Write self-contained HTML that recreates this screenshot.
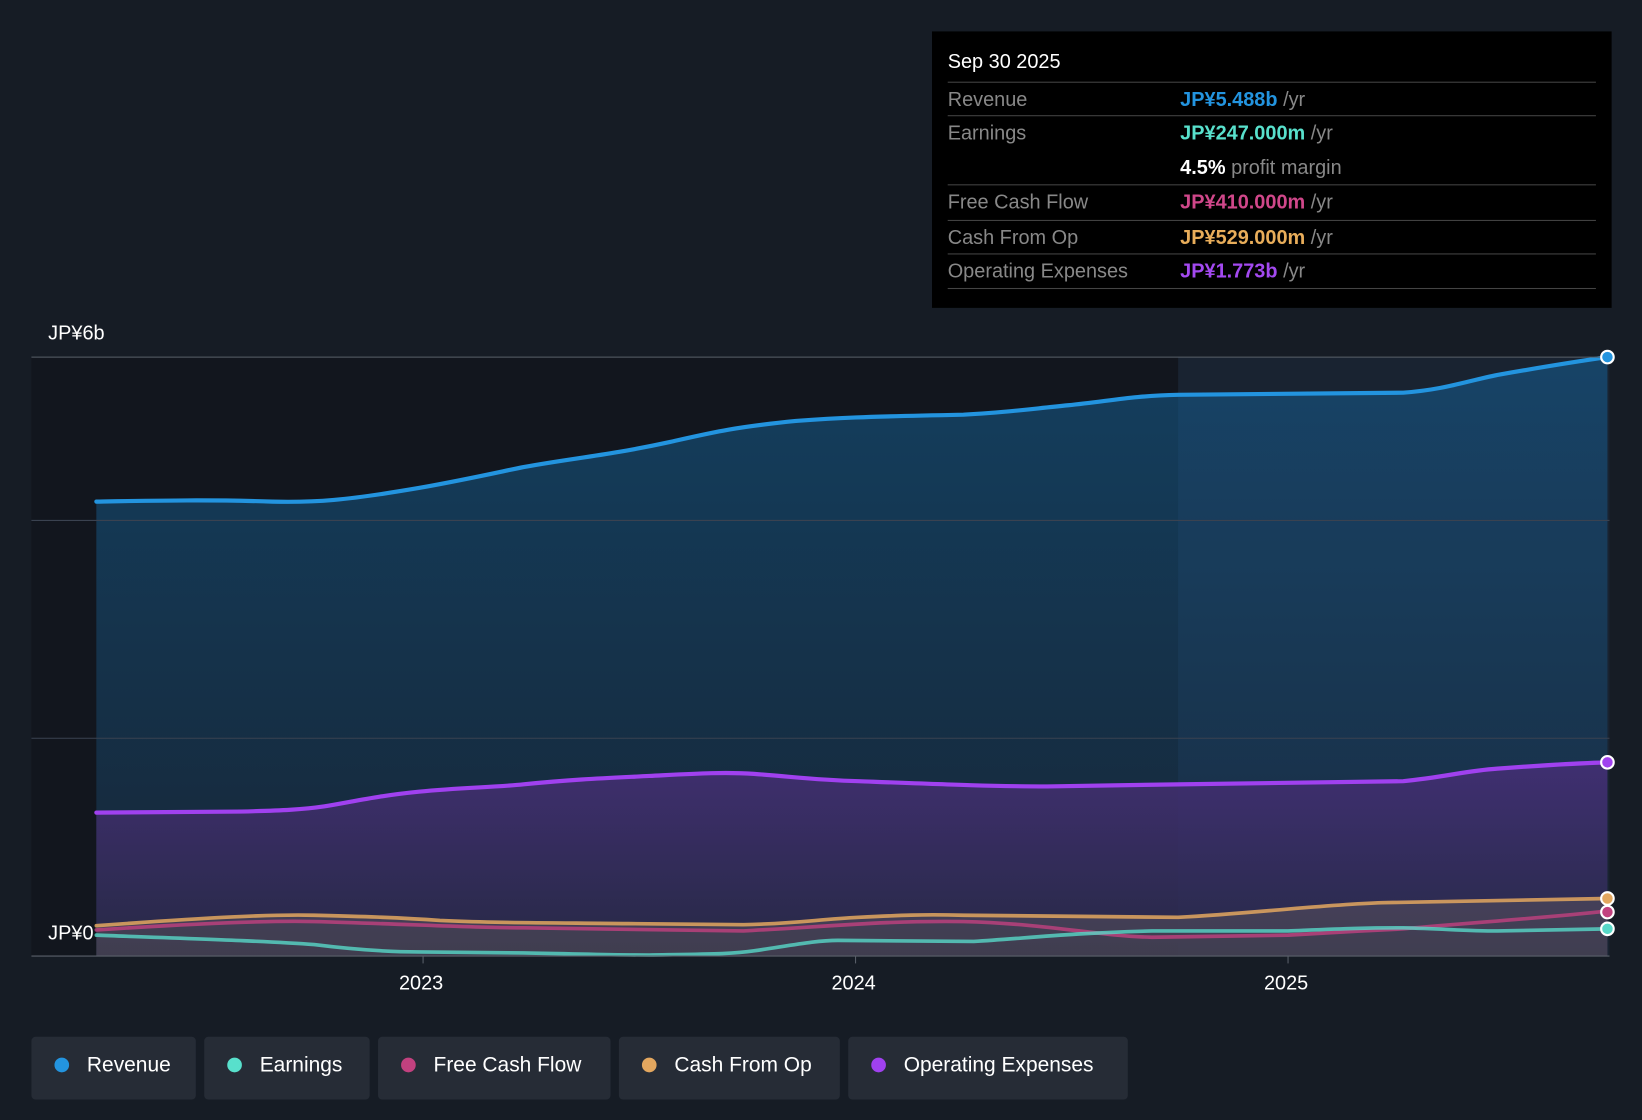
<!DOCTYPE html>
<html><head><meta charset="utf-8"><style>
html,body{margin:0;padding:0;background:#161c25;width:1642px;height:1120px;overflow:hidden}
#w{width:1568px;height:1070px;transform:scale(1.04719);transform-origin:0 0;position:relative;font-family:"Liberation Sans",sans-serif}
.tt{position:absolute;left:890px;top:30px;width:649px;height:264px;background:#000;color:#fff}
.tt .d{position:absolute;left:15px;top:19px;font-size:19px}
.row{position:absolute;left:15px;width:619px;border-top:1px solid #444;font-size:19px;color:#888;height:32px;line-height:33px}
.row b{font-weight:normal;position:absolute;left:222px}
.row b span{font-weight:bold}
.leg{position:absolute;top:990px;height:60px;background:#262c36;border-radius:4px;color:#fff;font-size:20px;line-height:55px;padding-left:53px;box-sizing:border-box}
.leg i{position:absolute;left:22px;top:20px;width:14px;height:14px;border-radius:50%}
.ax{position:absolute;color:#fff;font-size:19px}
</style></head><body><div id="w">
<svg width="1568" height="1070" style="position:absolute;left:0;top:0">
<defs>
<linearGradient id="rg" x1="0" y1="0" x2="0" y2="1"><stop offset="0" stop-color="#14466a"/><stop offset="1" stop-color="#17283a"/></linearGradient>
<linearGradient id="og" x1="0" y1="0" x2="0" y2="1"><stop offset="0" stop-color="#4a2f7a"/><stop offset="1" stop-color="#2a2a48"/></linearGradient>
</defs>
<rect x="30" y="341" width="1095" height="572" fill="#12161e"/>
<path d="M92 479 C150 478 200 477 260 479 C300 480 330 478 400 466 C450 457 480 450 500 446 C550 437 580 435 640 422 C680 413 700 408 760 402 C800 399 820 398 920 396 C960 394 980 391 1020 387 C1060 383 1080 378 1125 377 L1340 375 C1380 372 1400 364 1430 358 C1470 351 1500 346 1535 341 L1535 913 L92 913 Z" fill="url(#rg)" opacity="0.85"/>
<rect x="1125" y="341" width="412" height="572" fill="#3a80c0" opacity="0.08"/>
<path d="M92 776 L230 775 C270 774 290 773 310 770 C340 765 360 760 400 756 C440 752 470 752 500 749 C550 744 580 743 620 741 C660 739 690 737 720 739 C760 742 780 745 820 746 C900 749 950 751 1000 751 L1125 749 L1340 746 C1380 742 1400 736 1430 734 C1470 731 1500 729 1535 728 L1535 913 L92 913 Z" fill="url(#og)" opacity="0.8"/>
<path d="M92 884 C200 876 260 873 300 874 C340 875 380 876 420 879 C460 881 500 881 600 882 L710 883 C760 882 780 878 820 876 C860 874 880 873 920 874 L1125 876 C1200 872 1260 864 1320 862 L1535 858 L1535 913 L92 913Z" fill="#8a7a70" opacity="0.25"/>
<g fill="none" stroke-width="4" stroke-linecap="round">
<path d="M92 479 C150 478 200 477 260 479 C300 480 330 478 400 466 C450 457 480 450 500 446 C550 437 580 435 640 422 C680 413 700 408 760 402 C800 399 820 398 920 396 C960 394 980 391 1020 387 C1060 383 1080 378 1125 377 L1340 375 C1380 372 1400 364 1430 358 C1470 351 1500 346 1535 341" stroke="#2394df"/>
<path d="M92 776 L230 775 C270 774 290 773 310 770 C340 765 360 760 400 756 C440 752 470 752 500 749 C550 744 580 743 620 741 C660 739 690 737 720 739 C760 742 780 745 820 746 C900 749 950 751 1000 751 L1125 749 L1340 746 C1380 742 1400 736 1430 734 C1470 731 1500 729 1535 728" stroke="#a041ef"/>
<path d="M92 884 C200 876 260 873 300 874 C340 875 380 876 420 879 C460 881 500 881 600 882 L710 883 C760 882 780 878 820 876 C860 874 880 873 920 874 L1125 876 C1200 872 1260 864 1320 862 L1535 858" stroke="#e3a75f" stroke-width="3.5" opacity="0.85"/>
<path d="M92 888 C200 881 260 879 300 880 C380 882 450 886 500 886 L710 889 C800 884 850 879 920 880 C1000 882 1050 894 1100 895 L1230 893 C1280 890 1300 889 1340 887 C1420 880 1480 876 1535 870" stroke="#c2417f" stroke-width="3.5" opacity="0.8"/>
<path d="M92 893 C200 897 260 899 300 902 C340 907 370 909 400 909 L500 910 C560 911 580 912 620 912 C680 911 700 911 720 908 C760 902 780 898 800 898 L930 899 C980 896 1020 891 1100 889 L1230 889 C1280 887 1300 886 1340 886 C1380 887 1400 889 1430 889 L1535 887" stroke="#58d8c8" stroke-width="3.5" opacity="0.8"/>
</g>
<line x1="30" y1="341" x2="1537" y2="341" stroke="#5a606a" stroke-width="1"/>
<line x1="30" y1="497" x2="1537" y2="497" stroke="#3a4250" stroke-width="1"/>
<line x1="30" y1="705" x2="1537" y2="705" stroke="#3a4250" stroke-width="1"/>
<line x1="30" y1="913" x2="1537" y2="913" stroke="#5a606a" stroke-width="1"/>
<line x1="404" y1="913" x2="404" y2="920" stroke="#5a606a"/><line x1="817" y1="913" x2="817" y2="920" stroke="#5a606a"/><line x1="1230" y1="913" x2="1230" y2="920" stroke="#5a606a"/>
<g stroke="#fff" stroke-width="2">
<circle cx="1535" cy="341" r="6" fill="#2394df"/>
<circle cx="1535" cy="728" r="6" fill="#a041ef"/>
<circle cx="1535" cy="858" r="6" fill="#e3a75f"/>
<circle cx="1535" cy="871" r="6" fill="#c2417f"/>
<circle cx="1535" cy="887" r="6" fill="#58d8c8"/>
</g>
</svg>
<div class="ax" style="left:46px;top:308px">JP¥6b</div>
<div class="ax" style="left:46px;top:881px">JP¥0</div>
<div class="ax" style="left:381px;top:929px">2023</div>
<div class="ax" style="left:794px;top:929px">2024</div>
<div class="ax" style="left:1207px;top:929px">2025</div>
<div class="tt">
<div class="d">Sep 30 2025</div>
<div class="row" style="top:48px">Revenue<b><span style="color:#2394df">JP¥5.488b</span> /yr</b></div>
<div class="row" style="top:80px;height:65px">Earnings<b><span style="color:#58e0cc">JP¥247.000m</span> /yr<br><span style="color:#fff">4.5%</span> profit margin</b></div>
<div class="row" style="top:146px">Free Cash Flow<b><span style="color:#d0478a">JP¥410.000m</span> /yr</b></div>
<div class="row" style="top:180px">Cash From Op<b><span style="color:#e8ad5a">JP¥529.000m</span> /yr</b></div>
<div class="row" style="top:212px;border-bottom:1px solid #444">Operating Expenses<b><span style="color:#a349f0">JP¥1.773b</span> /yr</b></div>
</div>
<div class="leg" style="left:30px;width:157px"><i style="background:#2394df"></i>Revenue</div>
<div class="leg" style="left:195px;width:158px"><i style="background:#58e0cc"></i>Earnings</div>
<div class="leg" style="left:361px;width:222px"><i style="background:#c2417f"></i>Free Cash Flow</div>
<div class="leg" style="left:591px;width:211px"><i style="background:#e3a75f"></i>Cash From Op</div>
<div class="leg" style="left:810px;width:267px"><i style="background:#a041ef"></i>Operating Expenses</div>
</div></body></html>
